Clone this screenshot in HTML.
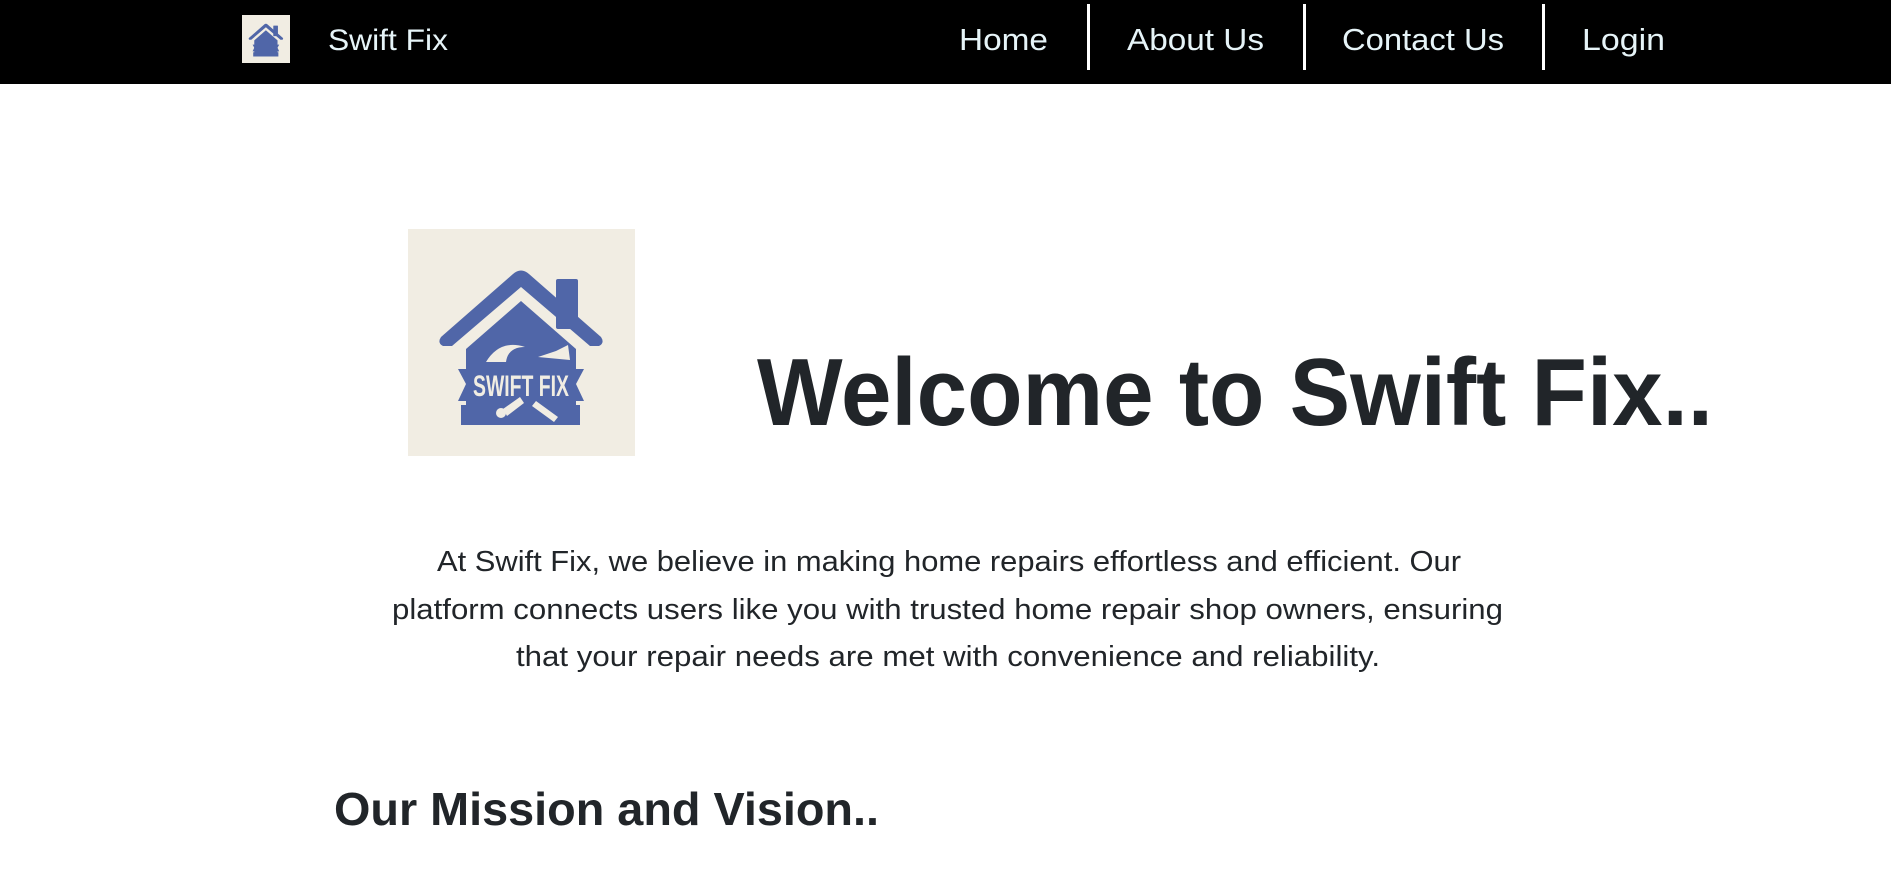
<!DOCTYPE html>
<html><head><meta charset="utf-8">
<style>
html,body{margin:0;padding:0;width:1891px;height:877px;overflow:hidden;background:#fff;font-family:"Liberation Sans",sans-serif;}
.nav{position:absolute;left:0;top:0;width:1891px;height:84px;background:#000;}
.t{position:absolute;white-space:nowrap;transform-origin:0 0;line-height:1;}
.nt{color:#e6f4f8;font-size:31px;}
.sep{position:absolute;top:4px;width:3px;height:66px;background:#fff;}
.dark{color:#212529;}
</style></head><body>
<div class="nav">
  <svg style="position:absolute;left:242px;top:15px" width="48" height="48" viewBox="0 0 227 227">
    <rect width="227" height="227" fill="#f1ede3"/>
    <g fill="#5066a8">
      <path d="M33 108 L105 45 Q113 38 121 45 L193 108 Q197 114 191 117 L182 117 L113 58 L44 117 L35 117 Q29 114 33 108 Z"/>
      <rect x="148" y="50" width="22" height="50" rx="2"/>
      <path d="M58 120 L113 72 L168 120 L168 176 L172 176 L172 196 L53 196 L53 176 L58 176 Z"/>
      <path d="M50 140 L176 140 L168 155 L176 172 L50 172 L58 155 Z"/>
    </g>
  </svg>
  <div class="t nt" style="left:328px;top:26px;font-size:30px" data-w="120">Swift Fix</div>
  <div class="t nt" style="left:959px;top:24px" data-w="89">Home</div>
  <div class="sep" style="left:1087px"></div>
  <div class="t nt" style="left:1127px;top:24px" data-w="137">About Us</div>
  <div class="sep" style="left:1303px"></div>
  <div class="t nt" style="left:1342px;top:24px" data-w="162">Contact Us</div>
  <div class="sep" style="left:1542px"></div>
  <div class="t nt" style="left:1582px;top:24px" data-w="83">Login</div>
</div>

<svg style="position:absolute;left:408px;top:229px" width="227" height="227" viewBox="0 0 227 227">
  <rect width="227" height="227" fill="#f1ede3"/>
  <g fill="#5066a8">
    <path d="M33 108 L105 45 Q113 38 121 45 L193 108 Q197 114 191 117 L182 117 L113 58 L44 117 L35 117 Q29 114 33 108 Z"/>
    <rect x="148" y="50" width="22" height="50" rx="2"/>
    <path d="M58 120 L113 72 L168 120 L168 176 L172 176 L172 196 L53 196 L53 176 L58 176 Z"/>
    <path d="M50 140 L176 140 L168 155 L176 172 L50 172 L58 155 Z"/>
  </g>
  <g fill="#f1ede3">
    <path d="M78 133 Q92 110 117 118 Q100 118 98 133 Z"/>
    <path d="M130 128 L148 122 L160 116 L162 131 Z"/>
    <circle cx="93" cy="184" r="5"/>
    <path d="M95 180 L112 168 L116 174 L99 187 Z"/>
    <path d="M128 172 L150 188 L146 193 L124 177 Z"/>
  </g>
  <text x="113" y="167" text-anchor="middle" fill="#f1ede3" font-family="Liberation Sans Narrow, Liberation Sans, sans-serif" font-size="30" font-weight="bold" textLength="96" lengthAdjust="spacingAndGlyphs">SWIFT FIX</text>
</svg>

<div class="t dark" style="left:757px;top:345px;font-size:96px;font-weight:bold" data-w="956">Welcome to Swift Fix..</div>

<div class="t dark" style="left:437px;top:548px;font-size:29px" data-w="1024">At Swift Fix, we believe in making home repairs effortless and efficient. Our</div>
<div class="t dark" style="left:392px;top:596px;font-size:29px" data-w="1111">platform connects users like you with trusted home repair shop owners, ensuring</div>
<div class="t dark" style="left:516px;top:643px;font-size:29px" data-w="864">that your repair needs are met with convenience and reliability.</div>

<div class="t dark" style="left:334px;top:786px;font-size:46px;font-weight:bold" data-w="545">Our Mission and Vision..</div>

<script>
document.querySelectorAll('[data-w]').forEach(function(e){
  var w=e.getBoundingClientRect().width, t=+e.getAttribute('data-w');
  if(w>0) e.style.transform='scaleX('+(t/w)+')';
});
</script>
</body></html>
